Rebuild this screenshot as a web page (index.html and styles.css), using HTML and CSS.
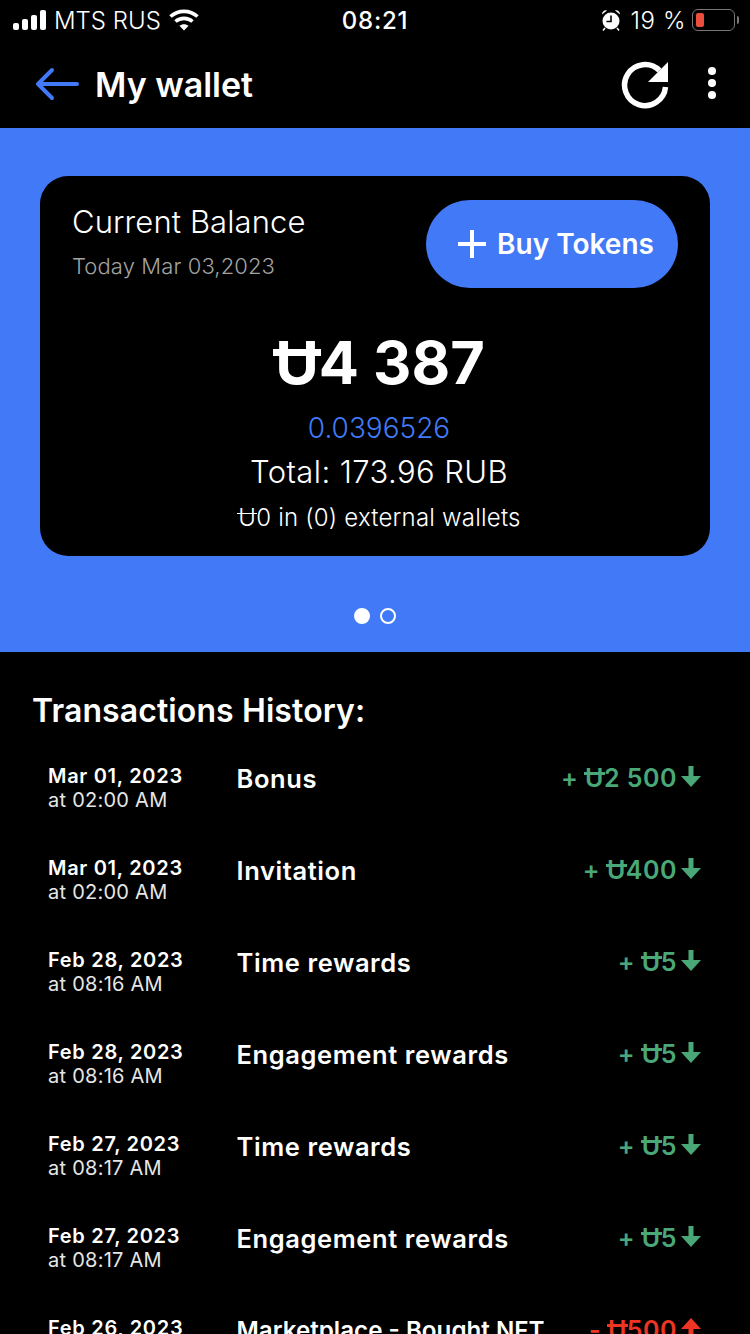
FILE: index.html
```html
<!DOCTYPE html>
<html lang="en">
<head>
<meta charset="UTF-8">
<meta name="viewport" content="width=device-width, initial-scale=1.0">
<title>My wallet</title>
<link rel="stylesheet" href="styles.css">
</head>
<body>
  <div class="status-bar">
    <div class="status-left">
      <svg class="signal" width="35" height="20" viewBox="0 0 35 20" fill="#fff">
        <rect x="0" y="13" width="6" height="7" rx="2"/>
        <rect x="9" y="9" width="6" height="11" rx="2"/>
        <rect x="18" y="5" width="6" height="15" rx="2"/>
        <rect x="27" y="0" width="6" height="20" rx="2"/>
      </svg>
      <span>MTS RUS</span>
      <svg class="wifi" width="30" height="22" viewBox="0 0 30 22" fill="none" stroke="#fff" stroke-width="3.6">
        <path d="M1.5 7.5C9 .6 21 .6 28.5 7.5"/>
        <path d="M6.5 12.5C11.2 8.3 18.8 8.3 23.5 12.5"/>
        <path d="M15 21.5l-4.600-4.800C13 14.600 17 14.600 19.600 16.700z" fill="#fff" stroke="none"/>
      </svg>
    </div>
    <div class="status-time">08:21</div>
    <div class="status-right">
      <svg width="20" height="22" viewBox="0 0 20 22">
        <circle cx="10" cy="12" r="8.500" fill="#fff"/>
        <path d="M10 6.500V12.500H5.500" fill="none" stroke="#000" stroke-width="1.600"/>
        <path d="M1 5.500C1 2.500 3.500 .8 6 1.500zM19 5.500C19 2.500 16.500 .8 14 1.500z" fill="#fff"/>
        <path d="M4 19l-2 2.500M16 19l2 2.500" stroke="#fff" stroke-width="1.500"/>
      </svg>
      <span>19 %</span>
      <div class="battery"><div class="battery-level"></div></div>
      <div class="battery-tip"></div>
    </div>
  </div>

  <header class="top-nav">
    <svg class="back" width="46" height="34" viewBox="0 0 46 34" fill="none" stroke="#4279f7" stroke-width="4" stroke-linecap="round" stroke-linejoin="round">
      <path d="M43 17H4M18 3L4 17L18 31"/>
    </svg>
    <h1>My wallet</h1>
    <svg class="refresh" width="48" height="48" viewBox="0 0 48 48">
      <path d="M44.500 26A20.500 20.500 0 1 1 38.500 9.500" fill="none" stroke="#fff" stroke-width="5.500"/>
      <path d="M47 1V21H27z" fill="#fff"/>
    </svg>
    <div class="more"><i></i><i></i><i></i></div>
  </header>

  <section class="hero">
    <div class="balance-card">
      <div class="card-top">
        <div>
          <div class="card-title">Current Balance</div>
          <div class="card-date">Today Mar 03,2023</div>
        </div>
        <button class="buy-btn"><span class="plus"></span>Buy Tokens</button>
      </div>
      <div class="balance-value"><span class="coin">U</span>4 387</div>
      <div class="balance-crypto">0.0396526</div>
      <div class="balance-total">Total: 173.96 RUB</div>
      <div class="balance-ext"><span class="coin thin">U</span>0 in (0) external wallets</div>
    </div>
    <div class="dots"><span class="dot on"></span><span class="dot"></span></div>
  </section>

  <section class="history">
    <h2>Transactions History:</h2>

    <div class="tx">
      <div class="tx-date"><b>Mar 01, 2023</b>at 02:00 AM</div>
      <div class="tx-name">Bonus</div>
      <div class="tx-amount in">+ <span class="coin">U</span>2 500<svg width="20" height="21" viewBox="0 0 20 21"><path d="M7.500 0h5v10H20L10 21L0 10h7.500z"/></svg></div>
    </div>
    <div class="tx">
      <div class="tx-date"><b>Mar 01, 2023</b>at 02:00 AM</div>
      <div class="tx-name">Invitation</div>
      <div class="tx-amount in">+ <span class="coin">U</span>400<svg width="20" height="21" viewBox="0 0 20 21"><path d="M7.500 0h5v10H20L10 21L0 10h7.500z"/></svg></div>
    </div>
    <div class="tx">
      <div class="tx-date"><b>Feb 28, 2023</b>at 08:16 AM</div>
      <div class="tx-name">Time rewards</div>
      <div class="tx-amount in">+ <span class="coin">U</span>5<svg width="20" height="21" viewBox="0 0 20 21"><path d="M7.500 0h5v10H20L10 21L0 10h7.500z"/></svg></div>
    </div>
    <div class="tx">
      <div class="tx-date"><b>Feb 28, 2023</b>at 08:16 AM</div>
      <div class="tx-name">Engagement rewards</div>
      <div class="tx-amount in">+ <span class="coin">U</span>5<svg width="20" height="21" viewBox="0 0 20 21"><path d="M7.500 0h5v10H20L10 21L0 10h7.500z"/></svg></div>
    </div>
    <div class="tx">
      <div class="tx-date"><b>Feb 27, 2023</b>at 08:17 AM</div>
      <div class="tx-name">Time rewards</div>
      <div class="tx-amount in">+ <span class="coin">U</span>5<svg width="20" height="21" viewBox="0 0 20 21"><path d="M7.500 0h5v10H20L10 21L0 10h7.500z"/></svg></div>
    </div>
    <div class="tx">
      <div class="tx-date"><b>Feb 27, 2023</b>at 08:17 AM</div>
      <div class="tx-name">Engagement rewards</div>
      <div class="tx-amount in">+ <span class="coin">U</span>5<svg width="20" height="21" viewBox="0 0 20 21"><path d="M7.500 0h5v10H20L10 21L0 10h7.500z"/></svg></div>
    </div>
    <div class="tx">
      <div class="tx-date"><b>Feb 26, 2023</b></div>
      <div class="tx-name long">Marketplace - Bought NFT</div>
      <div class="tx-amount out">- <span class="coin">U</span>500<svg width="20" height="21" viewBox="0 0 20 21"><path d="M7.500 21h5V11H20L10 0L0 11h7.500z"/></svg></div>
    </div>
  </section>
</body>
</html>
```

FILE: styles.css
```css
html {
  font-family: "Inter", "Liberation Sans", sans-serif;
  color: #fff;
  background: #000;
}

body {
  margin: 0;
  width: 750px;
  height: 1334px;
  overflow: hidden;
  background: #000;
}

/* status bar */
.status-bar {
  height: 40px;
  display: grid;
  grid-template-columns: 1fr auto 1fr;
  align-items: center;
  padding: 0 11px 0 13px;
  font-size: 24px;
  box-sizing: border-box;
}

.status-left {
  display: flex;
  align-items: center;
  gap: 6px;
  font-weight: 300;
}

.status-left .wifi {
  margin-left: 2px;
}

.status-time {
  font-weight: 500;
  letter-spacing: 0.8px;
  margin-left: -2px;
}

.status-right {
  display: flex;
  align-items: center;
  justify-content: flex-end;
  font-weight: 300;
}

.status-right span {
  margin-left: 9px;
  letter-spacing: 0.6px;
}

.battery {
  width: 43px;
  height: 22px;
  margin-left: 6px;
  padding: 3px;
  box-sizing: border-box;
  border: 1.500px solid #777;
  border-radius: 6px;
}

.battery-level {
  width: 8px;
  height: 100%;
  border-radius: 2px;
  background: #eb4e3d;
}

.battery-tip {
  width: 2px;
  height: 8px;
  margin-left: 2px;
  background: #777;
  border-radius: 0 2px 2px 0;
}

/* nav */
.top-nav {
  height: 88px;
  display: flex;
  align-items: center;
  padding: 0 34px;
}

.top-nav h1 {
  margin: 0 0 0 15px;
  flex: 1;
  font-size: 34px;
  font-weight: 600;
}

.refresh {
  margin-top: 2px;
}

.more {
  display: flex;
  flex-direction: column;
  gap: 4px;
  margin-left: 39px;
  margin-top: -3px;
}

.more i {
  width: 8px;
  height: 8px;
  border-radius: 50%;
  background: #fff;
}

/* blue area with the card */
.hero {
  height: 524px;
  background: #4279f7;
  padding: 48px 40px 0;
  box-sizing: border-box;
}

.balance-card {
  height: 380px;
  background: #000;
  border-radius: 28px;
  padding: 24px 32px 0 32px;
  box-sizing: border-box;
  text-align: center;
}

.card-top {
  display: flex;
  justify-content: space-between;
  text-align: left;
}

.card-title {
  font-size: 31px;
  font-weight: 300;
  line-height: 44px;
  letter-spacing: 0.1px;
}

.card-date {
  margin-top: 5px;
  font-size: 22px;
  font-weight: 300;
  line-height: 34px;
  letter-spacing: 0.1px;
  color: #a3a3a3;
}

.buy-btn {
  width: 252px;
  height: 88px;
  padding: 0 0 0 8px;
  border: 0;
  border-radius: 44px;
  background: #4279f7;
  color: #fff;
  font-family: inherit;
  font-size: 28px;
  font-weight: 600;
  display: flex;
  align-items: center;
  justify-content: center;
  gap: 11px;
}

.plus {
  position: relative;
  width: 28px;
  height: 28px;
}

.plus::before,
.plus::after {
  content: "";
  position: absolute;
  background: #fff;
}

.plus::before {
  left: 0;
  right: 0;
  top: 12px;
  height: 4px;
}

.plus::after {
  top: 0;
  bottom: 0;
  left: 12px;
  width: 4px;
}

.balance-value {
  margin-top: 36px;
  padding-left: 10px;
  font-size: 59.500px;
  font-weight: 700;
  line-height: 76px;
}

.balance-crypto {
  margin-top: 8px;
  font-size: 28px;
  font-weight: 300;
  line-height: 40px;
  color: #4279f7;
  padding-left: 8px;
}

.balance-total {
  margin-top: 1px;
  padding-left: 8px;
  font-size: 31px;
  font-weight: 300;
  line-height: 46px;
  letter-spacing: 0.4px;
}

.balance-ext {
  margin-top: 5px;
  padding-left: 9px;
  font-size: 24px;
  font-weight: 300;
  line-height: 36px;
  letter-spacing: 0.2px;
}

/* currency sign: a U with a bar through the top */
.coin {
  position: relative;
  display: inline-block;
  line-height: 1;
}

.coin::after {
  content: "";
  position: absolute;
  left: -0.04em;
  right: -0.04em;
  top: 0.275em;
  height: 0.12em;
  background: currentColor;
}

.coin.thin::after {
  height: 0.07em;
}

.dots {
  display: flex;
  justify-content: center;
  gap: 10px;
  margin-top: 52px;
}

.dot {
  width: 16px;
  height: 16px;
  box-sizing: border-box;
  border: 2px solid #fff;
  border-radius: 50%;
}

.dot.on {
  background: #fff;
}

/* transactions */
.history {
  padding: 39px 49px 0 33px;
}

.history h2 {
  margin: 0 0 31px -1px;
  font-size: 32px;
  font-weight: 600;
  line-height: 40px;
  letter-spacing: 0.1px;
}

.tx {
  height: 92px;
  display: flex;
  padding-left: 15px;
  box-sizing: border-box;
}

.tx-date {
  width: 189px;
  flex: none;
  font-size: 20px;
  font-weight: 400;
  line-height: 24px;
  letter-spacing: 0.25px;
  color: #e6e6e6;
  padding-top: 2px;
}

.tx-date b {
  display: block;
  color: #fff;
  font-weight: 600;
  letter-spacing: 0.7px;
}

.tx-name {
  flex: 1;
  margin-left: -0.5px;
  font-size: 25.500px;
  font-weight: 600;
  line-height: 32px;
  letter-spacing: 0.6px;
  white-space: nowrap;
  padding-top: 1px;
}

.tx-name.long {
  font-size: 24.200px;
  letter-spacing: 0;
}

.tx-amount {
  display: flex;
  align-items: flex-start;
  font-size: 25px;
  font-weight: 600;
  line-height: 32px;
  letter-spacing: 0.5px;
  white-space: pre;
}

.tx-amount .coin {
  line-height: 32px;
}

.tx-amount .coin::after {
  top: 0.41em;
  height: 0.11em;
}

.tx-amount svg {
  margin: 4px 0 0 4px;
  fill: currentColor;
}

.tx-amount.in {
  color: #4aa878;
}

.tx-amount.out {
  color: #ee3524;
}
```
